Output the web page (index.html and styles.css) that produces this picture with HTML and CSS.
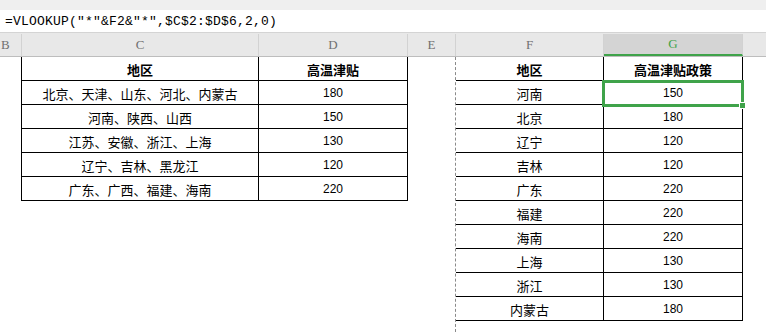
FILE: index.html
```html
<!DOCTYPE html>
<html lang="zh">
<head>
<meta charset="utf-8">
<link rel="stylesheet" href="styles.css">
</head>
<body>
<div class="top"></div>
<div class="formula">=VLOOKUP("*"&amp;F2&amp;"*",$C$2:$D$6,2,0)</div>
<div class="colhead">
  <div class="ch c-b">B</div>
  <div class="ch c-c">C</div>
  <div class="ch c-d">D</div>
  <div class="ch c-e">E</div>
  <div class="ch c-f">F</div>
  <div class="ch c-g active">G</div>
  <div class="ch c-h"></div>
</div>
<div class="sheet">
  <div class="sp-b"></div>
  <div class="tbl tbl-left">
    <div class="cell hd">地区</div><div class="cell hd">高温津贴</div>
    <div class="cell">北京、天津、山东、河北、内蒙古</div><div class="cell num">180</div>
    <div class="cell">河南、陕西、山西</div><div class="cell num">150</div>
    <div class="cell">江苏、安徽、浙江、上海</div><div class="cell num">130</div>
    <div class="cell">辽宁、吉林、黑龙江</div><div class="cell num">120</div>
    <div class="cell">广东、广西、福建、海南</div><div class="cell num">220</div>
  </div>
  <div class="sp-e"></div>
  <div class="right">
    <div class="tbl tbl-right">
      <div class="cell hd">地区</div><div class="cell hd">高温津贴政策</div>
      <div class="cell">河南</div><div class="cell num">150</div>
      <div class="cell">北京</div><div class="cell num">180</div>
      <div class="cell">辽宁</div><div class="cell num">120</div>
      <div class="cell">吉林</div><div class="cell num">120</div>
      <div class="cell">广东</div><div class="cell num">220</div>
      <div class="cell">福建</div><div class="cell num">220</div>
      <div class="cell">海南</div><div class="cell num">220</div>
      <div class="cell">上海</div><div class="cell num">130</div>
      <div class="cell">浙江</div><div class="cell num">130</div>
      <div class="cell">内蒙古</div><div class="cell num">180</div>
    </div>
  </div>
</div>
<div class="sel"><span class="handle"></span></div>
</body>
</html>
```
FILE: styles.css
```css
html, body {
  margin: 0;
  padding: 0;
  width: 766px;
  height: 332px;
  overflow: hidden;
  background: #fff;
  position: relative;
}
.top {
  height: 10px;
  background: #efefef;
}
.formula {
  height: 23px;
  box-sizing: border-box;
  padding-left: 5px;
  line-height: 23px;
  font-family: "Liberation Mono", "DejaVu Sans Mono", monospace;
  font-size: 13px;
  letter-spacing: 0.2px;
  color: #000;
  background: #fff;
  border-bottom: 1px solid #d4d4d4;
}
.colhead {
  display: flex;
  height: 24px;
  box-sizing: border-box;
  background: #e8e8e8;
  border-top: 1px solid #e8e8e8;
  border-bottom: 1px solid #bdbdbd;
}
.ch {
  box-sizing: border-box;
  border-right: 1px solid #d2d2d2;
  text-align: center;
  font-family: "Liberation Serif", "DejaVu Serif", serif;
  font-size: 13px;
  line-height: 22px;
  color: #707070;
}
.c-b { width: 22px; text-align: left; padding-left: 1px; }
.c-c { width: 237px; }
.c-d { width: 149px; }
.c-e { width: 48px; }
.c-f { width: 148px; }
.c-g { width: 139px; }
.c-h { flex: 1; border-right: none; }
.ch.active {
  background: #d4d4d4;
  color: #3fa34a;
  border-bottom: 2px solid #3fa34a;
  line-height: 20px;
}
.sheet {
  display: flex;
  align-items: flex-start;
  height: 275px;
}
.sp-b { width: 21px; flex: none; }
.sp-e { width: 47px; flex: none; }
.tbl {
  display: grid;
  grid-auto-rows: 24px;
  flex: none;
}
.tbl-left {
  grid-template-columns: 237px 149px;
  border-left: 1px solid #000;
}
.right {
  align-self: stretch;
  border-left: 1px dashed #8a8a8a;
}
.tbl-right {
  grid-template-columns: 148px 139px;
}
.cell {
  box-sizing: border-box;
  border-right: 1px solid #000;
  border-bottom: 1px solid #000;
  display: flex;
  align-items: center;
  justify-content: center;
  font-family: "Noto Sans CJK SC", "Liberation Sans", sans-serif;
  font-size: 13px;
  color: #000;
  padding-top: 1px;
}
.cell.hd {
  font-weight: bold;
}
.cell.num {
  font-family: "Liberation Sans", "Noto Sans CJK SC", sans-serif;
  font-size: 12px;
}
.sel {
  position: absolute;
  left: 602px;
  top: 80px;
  width: 142px;
  height: 27px;
  box-sizing: border-box;
  border: 3px solid #3fa34a;
}
.handle {
  position: absolute;
  right: -5px;
  bottom: -5px;
  width: 5px;
  height: 5px;
  background: #3fa34a;
  border: 1px solid #fff;
}
```
